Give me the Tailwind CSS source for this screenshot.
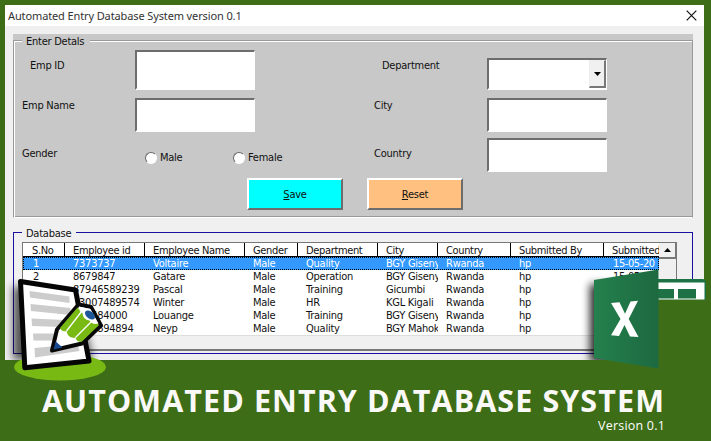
<!DOCTYPE html>
<html lang="en">
<head>
<meta charset="utf-8">
<title>Automated Entry Database System</title>
<script src="https://cdn.jsdelivr.net/npm/@tailwindcss/browser@4"></script>
</head>
<body class="bg-[#3d6d17]">
<div class="relative flex h-[441px] w-[711px] flex-col overflow-hidden bg-[#3d6d17] px-[5px] pt-[5px] font-['DejaVu_Sans_Condensed','DejaVu_Sans',sans-serif] text-[11px] leading-[13px] tracking-[-0.25px] font-stretch-condensed text-[#111]">
  <header class="flex h-[21px] w-[699px] shrink-0 items-center justify-between bg-white pl-[3px] pr-[7px] font-['Noto_Sans',sans-serif] text-[11px] tracking-[-0.12px] font-stretch-normal text-[#333]">
    <h1 class="whitespace-nowrap">Automated Entry Database System version 0.1</h1>
    <svg class="size-[11px]" viewBox="0 0 11 11"><path d="M.7.7l9.6 9.6M10.3.7L.7 10.3" stroke="#111" stroke-width="1.2"/></svg>
  </header>
  <main class="h-[334px] w-[699px] shrink-0 bg-[#f0f0f0] px-2 pt-2">
    <section class="h-[184px] w-[680px] bg-[#c8c8c8] pt-[6px]">
      <fieldset class="h-[178px] w-[680px] border border-t-0 border-[#999] border-b-white shadow-[inset_1px_0_white,inset_0_-1px_#999]">
        <div class="flex h-[2px] items-start">
          <i class="h-[2px] w-[8px] border-t border-[#999] bg-white"></i>
          <span class="-mt-[5px] ml-[4px] w-[60px] whitespace-nowrap">Enter Detals</span>
          <i class="ml-[4px] h-[2px] flex-1 border-t border-[#999] bg-white"></i>
        </div>
        <div class="flex h-[136px] pt-[8px]">
          <div class="w-[352px] pl-2">
            <label class="flex h-[48px]"><span class="w-[113px] pl-2 pt-[9px]">Emp ID</span><span class="h-[40px] w-[120px] border-t-2 border-r border-b-2 border-l-2 border-[#6d6d6d] border-r-white border-b-white bg-white"></span></label>
            <label class="flex h-[48px]"><span class="w-[113px] pt-[1px]">Emp Name</span><span class="h-[34px] w-[120px] border-t-2 border-r border-b-2 border-l-2 border-[#6d6d6d] border-r-white border-b-white bg-white"></span></label>
            <div class="flex"><span class="w-[123px] pt-[1px]">Gender</span>
              <div class="flex w-[88px] items-center gap-[3px] pt-[5px]"><i class="size-[12px] rounded-full border-[1.5px] border-[#666] border-r-white border-b-white bg-white"></i>Male</div>
              <div class="flex items-center gap-[3px] pt-[5px]"><i class="size-[12px] rounded-full border-[1.5px] border-[#666] border-r-white border-b-white bg-white"></i>Female</div>
            </div>
          </div>
          <div class="pl-2">
            <label class="flex h-[48px]"><span class="w-[113px] pl-2 pt-[9px]">Department</span>
              <span class="mt-2 flex h-[32px] w-[120px] justify-end border-t-2 border-r border-b-2 border-l-2 border-[#6d6d6d] border-r-white border-b-white bg-white"><i class="flex h-[28px] w-[17px] items-center justify-center border border-r-2 border-b-2 border-[#eee] border-r-[#777] border-b-[#777] bg-[#f0f0f0]"><svg class="h-[4px] w-[7px]" viewBox="0 0 7 4"><path d="M0 0h7L3.5 4z"/></svg></i></span></label>
            <label class="flex h-[40px]"><span class="w-[113px] pt-[1px]">City</span><span class="h-[34px] w-[120px] border-t-2 border-r border-b-2 border-l-2 border-[#6d6d6d] border-r-white border-b-white bg-white"></span></label>
            <label class="flex"><span class="w-[113px] pt-[9px]">Country</span><span class="h-[34px] w-[120px] border-t-2 border-r border-b-2 border-l-2 border-[#6d6d6d] border-r-white border-b-white bg-white"></span></label>
          </div>
        </div>
        <div class="flex gap-6 pl-[233px]">
          <button class="h-[32px] w-[96px] border-2 border-white border-r-[#6d6d6d] border-b-[#6d6d6d] bg-[#00ffff]"><u>S</u>ave</button>
          <button class="h-[32px] w-[96px] border-2 border-white border-r-[#6d6d6d] border-b-[#6d6d6d] bg-[#ffc080]"><u>R</u>eset</button>
        </div>
      </fieldset>
    </section>
    <section class="mt-[14px] h-[122px] w-[680px] border border-t-0 border-[#1a11a0]">
      <div class="flex h-[10px] items-start">
        <i class="h-px w-[8px] bg-[#1a11a0]"></i><span class="-mt-[5px] ml-[4px] w-[46px] whitespace-nowrap">Database</span><i class="ml-[4px] h-px flex-1 bg-[#1a11a0]"></i>
      </div>
      <div class="ml-[8px] flex h-[109px] w-[655px] flex-col border border-b-2 border-[#777] bg-[#f0f0f0]">
        <div class="flex h-[93px]">
          <div id="grid" class="w-[636px] overflow-hidden border-b border-[#ddd] bg-white"></div>
          <div class="flex-1 bg-[#f0f0f0]"><div class="flex h-[16px] items-center justify-center border-r border-b-2 border-[#777]"><svg class="h-[4px] w-[7px]" viewBox="0 0 7 4"><path d="M0 4h7L3.5 0z"/></svg></div></div>
        </div>
      </div>
    </section>
  </main>
  <footer class="flex flex-1 flex-col items-end bg-[#3d6d17] pr-[41px] pt-[22px] font-['Open_Sans','Noto_Sans',sans-serif] font-stretch-normal text-white">
    <h2 class="text-[30.5px] leading-[36px] font-bold tracking-[1.08px] whitespace-nowrap text-[#faf9f7]">AUTOMATED ENTRY DATABASE SYSTEM</h2>
    <p class="text-[12.5px] leading-[16px] tracking-[.2px]">Version 0.1</p>
  </footer>

  <svg class="absolute left-0 top-[270px] h-[115px] w-[125px]" viewBox="0 270 125 115">
    <defs><filter id="soft" x="-30%" y="-30%" width="160%" height="160%"><feGaussianBlur stdDeviation="4"/></filter></defs>
    <path d="M13 286L76 297 92 355V360H13z" fill="#000" opacity=".65" filter="url(#soft)"/>
    <path d="M0 360H125V385H0z" fill="#3d6d17"/>
    <ellipse cx="60" cy="367" rx="46" ry="13.5" fill="#78b914"/>
    <path d="M20.500 281.500L75.500 290 89 361 24.800 367.800z" fill="#fff" stroke="#050505" stroke-width="5" stroke-linejoin="round"/>
    <g fill="#ccc"><path d="M29.500 291l40 5.500v6.500l-39.500-5.500z"/><path d="M30.500 304l40 4v7l-39.500-4z"/><path d="M31.500 318.500l33 1.500-4 7-28.500-1z"/><path d="M33 333.500h22l-2 7H33.500z"/><path d="M34.500 348l43-4 2 7-44.500 6.500z"/></g>
    <path d="M52 350.500L57 329.500 78.500 304.500 91 307 101 325.500 82 343.500z" fill="#fff" stroke="#080808" stroke-width="4" stroke-linejoin="round"/>
    <path d="M60 328L77.500 307.500 81 311 99 325 82 341.500Q77 343 75.500 337.500 68 339 66.500 331 62 332 60 328z" fill="#78b914"/>
    <path d="M66.500 331L82 311M75.500 337.500L92 321" stroke="#fff" stroke-width="1.300"/>
    <path d="M79 306.500L90.500 309 98.500 323.500Q92 325 89.500 320.500 83 320 82.500 313 79 312 79 306.500z" fill="#fff"/>
    <ellipse cx="90" cy="315" rx="5.800" ry="3.500" transform="rotate(38 90 315)" fill="#1d5799"/>
    <path d="M53.500 349.500L55.800 341.500 62.500 347.500z" fill="#174a91"/>
  </svg>

  <svg class="absolute left-[575px] top-[260px] h-[115px] w-[136px]" viewBox="575 260 136 115">
    <defs><linearGradient id="book"><stop stop-color="#24804d"/><stop offset="1" stop-color="#1d6940"/></linearGradient><clipPath id="clip"><path d="M575 260H711V360H575z"/></clipPath></defs>
    <g clip-path="url(#clip)"><path d="M590 284L640 284V362H590z" fill="#000" opacity=".85" filter="url(#soft)"/></g>
    <path d="M594 360H711V375H594zM657 299H711V375H657z" fill="#3d6d17"/>
    <path d="M657 279H703.500L706 282V299.500H657z" fill="#1e7145"/>
    <path d="M658 282.500H704.500V299.500H658z" fill="#fff"/>
    <path d="M658 289H674V298.500H658zM678 289H696V298.500H678z" fill="#1e7145"/>
    <path d="M594 280L658.500 269.500V368.500L594 358z" fill="url(#book)"/>
    <path d="M611 303l8.500-.8 5.500 11.600 5.500-12.300 7.500-.7-9.300 18.300L638.500 337l-8.500-.5-5.500-11.500-5.500 11-8-.8 9.500-16.300z" fill="#fff"/>
  </svg>
</div>
<script>
const widths=[42,80,100,53,80,60,73,93,55];
const head=["S.No","Employee id","Employee Name","Gender","Department","City","Country","Submitted By","Submitted"];
const rows=[
["1","7373737","Voltaire","Male","Quality","BGY Giseny","Rwanda","hp","15-05-20"],
["2","8679847","Gatare","Male","Operation","BGY Giseny","Rwanda","hp","15-05-20"],
["3","87946589239","Pascal","Male","Training","Gicumbi","Rwanda","hp",""],
["4","93007489574","Winter","Male","HR","KGL Kigali","Rwanda","hp",""],
["5","789484000","Louange","Male","Training","BGY Giseny","Rwanda","hp",""],
["6","7894894894","Neyp","Male","Quality","BGY Mahok","Rwanda","hp",""]];
const line=(cells,cls,cell)=>`<div class="${cls}">${cells.map((t,i)=>`<div class="${cell}" style="width:${widths[i]}px"><span>${t}</span></div>`).join("")}</div>`;
document.getElementById("grid").innerHTML=
 line(head,"flex h-[14px] w-[636px] border-b border-black tracking-[-0.35px]","shrink-0 overflow-hidden whitespace-nowrap border-r border-black pt-px pl-[8px] first:pl-[9px] last:border-r-0")+
 rows.map((r,i)=>line(r,i?"flex h-[13px] w-[636px]":"flex h-[13px] w-[636px] outline-1 -outline-offset-1 outline-dotted outline-black bg-[#3399ff] text-white","shrink-0 overflow-hidden whitespace-nowrap pl-[8px] first:pl-[10px] last:pl-[9px] last:tracking-[-0.4px]")).join("");
</script>
</body>
</html>
